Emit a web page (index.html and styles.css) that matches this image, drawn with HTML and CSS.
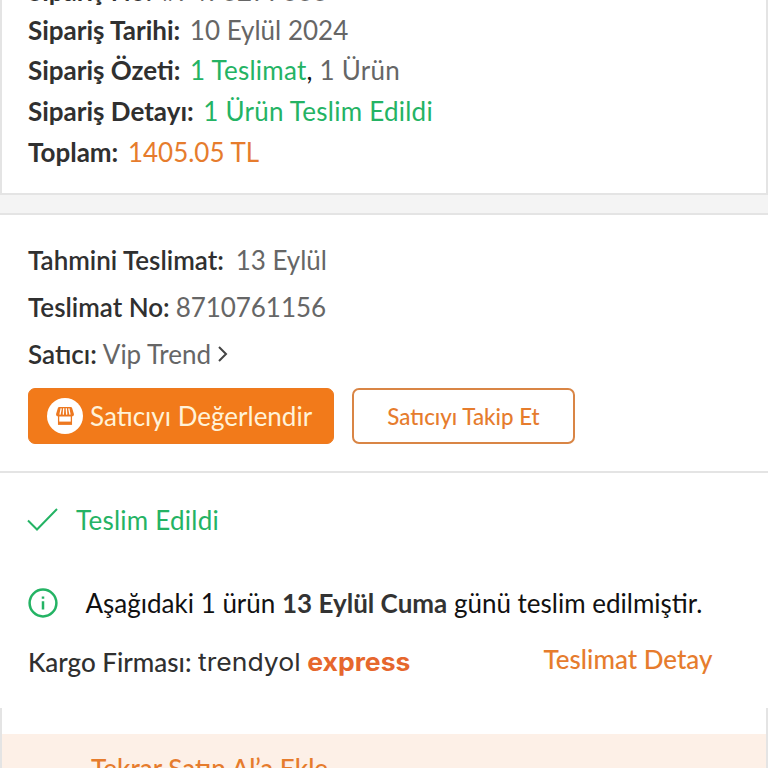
FILE: index.html
```html
<!DOCTYPE html>
<html lang="tr">
<head>
<meta charset="utf-8">
<title>Sipariş Detayı</title>
<link rel="stylesheet" href="styles.css">
</head>
<body>
<main class="screen">
  <section class="summary">
    <p class="row first"><b class="label">Sipariş No:</b><span class="value">#7473277633</span></p>
    <p class="row"><b class="label">Sipariş Tarihi:</b><span class="value">10 Eylül 2024</span></p>
    <p class="row"><b class="label">Sipariş Özeti:</b><span class="value wide"><span class="green">1 Teslimat</span><span class="black">,</span> 1 Ürün</span></p>
    <p class="row"><b class="label">Sipariş Detayı:</b><span class="value green wide">1 Ürün Teslim Edildi</span></p>
    <p class="row"><b class="label">Toplam:</b><span class="value orange">1405.05 TL</span></p>
  </section>
  <div class="divider"></div>
  <section class="delivery">
    <p class="row"><span class="semi l-est">Tahmini Teslimat:</span><span class="value">13 Eylül</span></p>
    <p class="row"><span class="semi l-num">Teslimat No:</span><span class="value">8710761156</span></p>
    <p class="row"><span class="semi l-sel">Satıcı:</span><span class="value">Vip Trend</span><svg class="chevron" viewBox="0 0 12 18"><path d="M2 2l7 7-7 7"/></svg></p>
    <div class="buttons">
      <button class="btn primary"><span class="badge"><svg viewBox="0 0 20 20"><path d="M4.2 1h11.6q1 0 1.3 1L19 8.2Q19 10.4 16.6 10.4H3.4Q1 10.4 1 8.2L2.9 2q.3-1 1.3-1z" fill="#ed7820"/><path d="M6.2 2.3L5 8.6M8.7 2.3l-.4 6.3M11.3 2.3l.4 6.3M13.8 2.3L15 8.6" stroke="#fff" stroke-width="1.3" fill="none"/><path d="M3.6 10v8.2h12.8V10" fill="none" stroke="#ed7820" stroke-width="1.3"/><path d="M3 15.6h14V18.6H3z" fill="#ed7820"/></svg></span><span>Satıcıyı Değerlendir</span></button>
      <button class="btn outline"><span>Satıcıyı Takip Et</span></button>
    </div>
  </section>
  <section class="status">
    <div class="done"><svg class="check" viewBox="0 0 32 26"><path d="M1 13.5l9 9L30 2"/></svg><span>Teslim Edildi</span></div>
    <div class="notice"><svg class="info" viewBox="0 0 30 30"><circle cx="15" cy="15" r="13.4"/><path d="M15 13.2v8.4M15 8.5v2.3"/></svg><span>Aşağıdaki 1 ürün <b>13 Eylül Cuma</b> günü teslim edilmiştir.</span></div>
    <div class="cargo"><span class="firm">Kargo Firması:</span><span class="logo"><span class="brand">trendyol</span><span class="express">express</span></span><a class="detail">Teslimat Detay</a></div>
  </section>
  <section class="product"><div class="again"><span>Tekrar Satın Al’a Ekle</span></div></section>
</main>
</body>
</html>
```
FILE: styles.css
```css
* { box-sizing: border-box; }
body { margin: 0; background: #fff; font-family: Lato, "Liberation Sans", sans-serif; font-size: 26px; color: #303030; }
p { margin: 0; }
.screen { width: 768px; height: 768px; overflow: hidden; display: flex; flex-direction: column; }
.row { display: flex; align-items: center; white-space: nowrap; }
.value { color: #666; }
.green { color: #24b364; }
.orange { color: #e67c2d; }
.black { color: #111; }
.wide { letter-spacing: 0.25px; }
.summary { height: 193px; flex: none; overflow: hidden; border: solid #e4e4e4; border-width: 0 2px; display: flex; flex-direction: column; justify-content: flex-end; padding: 0 26px 21px; }
.summary .row { height: 40.7px; flex: none; }
.summary .first { height: 36px; }
.summary .label { font-weight: 700; margin-right: 9.6px; }
.divider { flex: none; height: 22px; background: #f4f4f4; border: solid #e4e4e4; border-width: 2px 0; }
.delivery { flex: none; height: 258px; border-bottom: 2px solid #e4e4e4; padding: 21px 28px 0; }
.delivery .row { height: 47.3px; }
.semi { font-weight: 600; }
.l-est { margin-right: 12px; }
.l-num, .l-sel { margin-right: 6px; }
.delivery .value { letter-spacing: -0.05px; }
.chevron { width: 12px; height: 18px; margin-left: 6px; fill: none; stroke: #444; stroke-width: 2; }
.buttons { display: flex; gap: 18px; margin-top: 10.1px; }
.btn { height: 56px; font: inherit; border-radius: 7px; padding: 0; display: flex; align-items: center; white-space: nowrap; }
.primary { width: 306px; background: #f27a1a; border: 1px solid #ed7a20; color: #fff2d8; padding-left: 18px; gap: 7px; }
.badge { width: 36px; height: 36px; border-radius: 50%; background: #fff; display: flex; align-items: center; justify-content: center; }
.badge svg { width: 20px; height: 20px; }
.outline { width: 223px; background: #fff; border: 2px solid #d98545; color: #e67c2d; justify-content: center; font-size: 22.3px; font-weight: 500; padding-top: 1px; }
.status { flex: none; height: 235px; padding: 0 28px; white-space: nowrap; }
.done { display: flex; align-items: center; height: 94px; color: #24b364; letter-spacing: 0.25px; }
.check { width: 32px; height: 26px; margin: 0 17px 0 -1px; fill: none; stroke: #24b364; stroke-width: 2; }
.notice { display: flex; align-items: center; height: 72px; color: #111; }
.notice b { color: #333; }
.info { width: 30px; height: 30px; margin-right: 27.5px; fill: none; stroke: #24b364; stroke-width: 2.5; }
.cargo { display: flex; align-items: center; height: 46px; }
.firm { font-weight: 500; margin-right: 7px; }
.logo { font-family: Inter, sans-serif; font-size: 24.5px; display: flex; gap: 6px; transform: scaleX(1.085); transform-origin: left; padding-bottom: 1px; }
.express { color: #e6672d; font-weight: 700; }
.detail { margin-left: auto; margin-right: 27.5px; padding-bottom: 6px; color: #e67c2d; font-weight: 500; }
.product { flex: none; height: 60px; border: solid #e4e4e4; border-width: 0 2px; padding-top: 26px; }
.again { background: #fdf0e7; height: 34px; padding: 18px 0 0 89px; color: #e67c2d; font-weight: 500; white-space: nowrap; }
```
